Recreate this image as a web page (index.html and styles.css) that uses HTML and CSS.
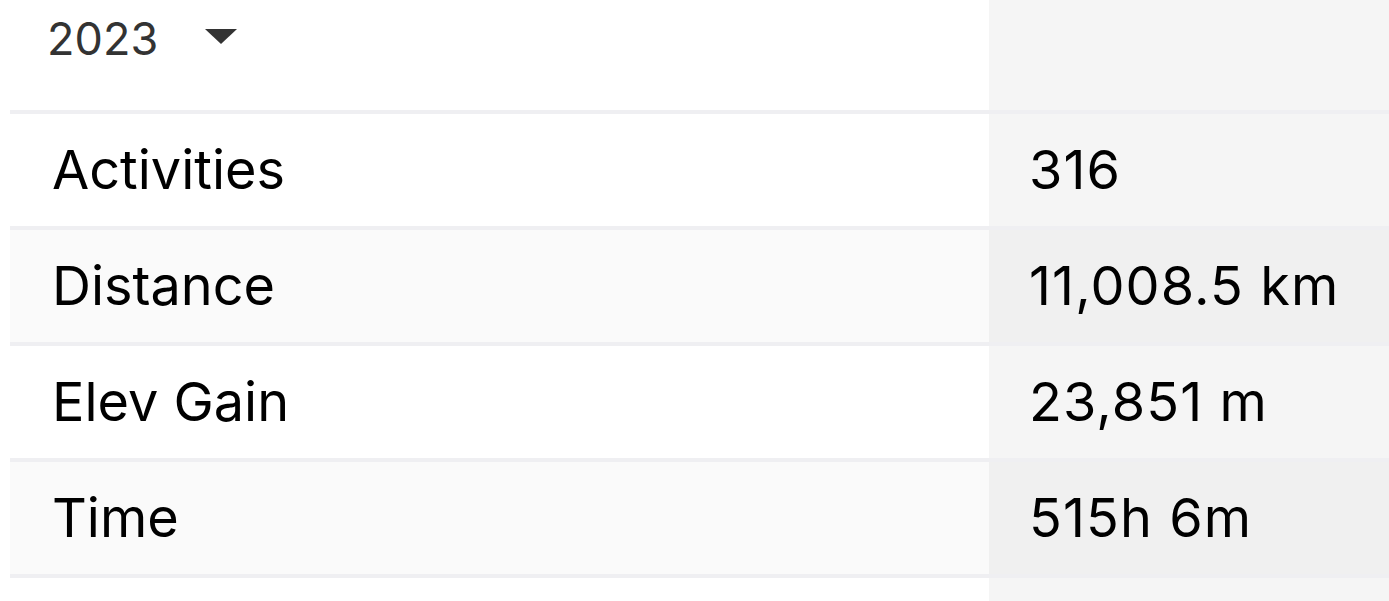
FILE: index.html
```html
<!DOCTYPE html>
<html>
<head>
<meta charset="utf-8">
<link rel="stylesheet" href="styles.css">
</head>
<body>
<table class="stats">
  <thead>
    <tr class="head-row">
      <th class="label-cell head-cell">
        <span class="year">2023</span>
        <svg class="caret" width="32" height="15" viewBox="0 0 32 15"><polygon points="0,0 32,0 16,15" fill="#333"/></svg>
      </th>
      <th class="value-cell"></th>
    </tr>
  </thead>
  <tbody>
    <tr class="row">
      <td class="label-cell">Activities</td>
      <td class="value-cell">316</td>
    </tr>
    <tr class="row alt">
      <td class="label-cell">Distance</td>
      <td class="value-cell">11,008.5 km</td>
    </tr>
    <tr class="row">
      <td class="label-cell">Elev Gain</td>
      <td class="value-cell">23,851 m</td>
    </tr>
    <tr class="row alt">
      <td class="label-cell">Time</td>
      <td class="value-cell">515h 6m</td>
    </tr>
    <tr class="row tail">
      <td class="label-cell"></td>
      <td class="value-cell"></td>
    </tr>
  </tbody>
</table>
</body>
</html>
```

FILE: styles.css
```css
html, body {
  margin: 0;
  padding: 0;
  background: #fff;
}
body {
  font-family: Inter, "Noto Sans", sans-serif;
  color: #000;
  overflow: hidden;
}
.stats {
  margin-left: 10px;
  width: 1379px;
  border-collapse: collapse;
  table-layout: fixed;
}
.stats th, .stats td {
  box-sizing: border-box;
}
.label-cell {
  width: 979px;
  padding: 0 0 0 42px;
  text-align: left;
  background: #fff;
}
.value-cell {
  padding: 0 0 0 40px;
  text-align: left;
  background: #f5f5f5;
  letter-spacing: 1.1px;
}
.head-row th {
  height: 112px;
  border-bottom: 4px solid #efeff2;
  vertical-align: top;
  font-weight: 400;
}
.head-cell {
  padding-left: 37px;
  padding-top: 12px;
  white-space: nowrap;
}
.year {
  font-size: 45px;
  color: #333;
  letter-spacing: 0.1px;
  line-height: 54px;
  display: inline-block;
  vertical-align: top;
}
.caret {
  display: inline-block;
  vertical-align: top;
  margin-top: 17px;
  margin-left: 42px;
}
.row td {
  height: 116px;
  border-bottom: 4px solid #efeff2;
  font-size: 54px;
  line-height: 1;
  vertical-align: middle;
}
.row.alt .label-cell { background: #fafafa; }
.row.alt .value-cell { background: #f0f0f0; }
.row.tail td {
  border-bottom: none;
  height: 40px;
}
```
